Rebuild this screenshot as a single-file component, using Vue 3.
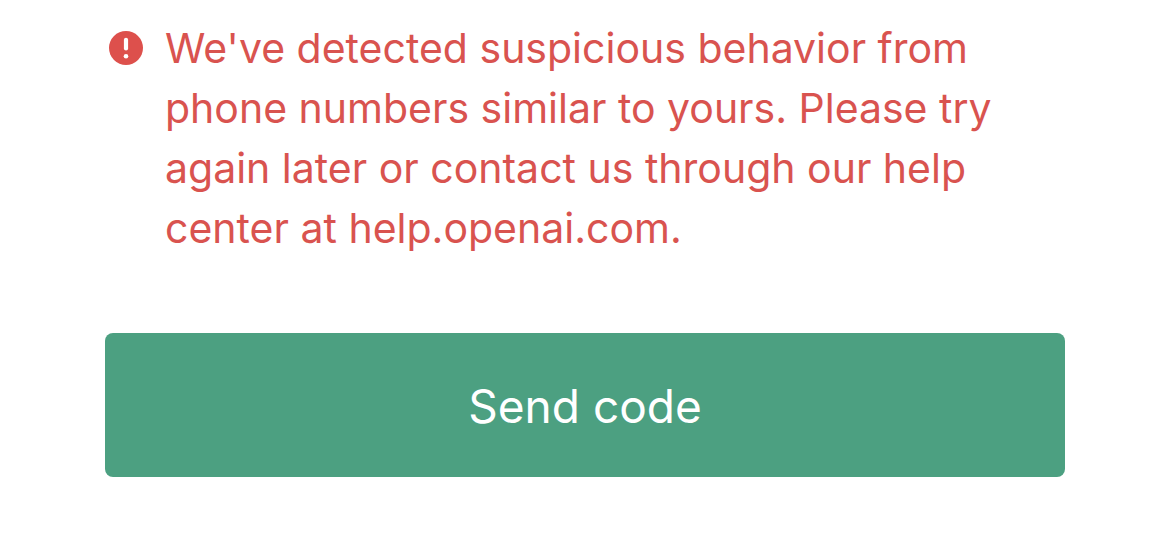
<script setup>
const message =
  "We've detected suspicious behavior from phone numbers similar to yours. Please try again later or contact us through our help center at help.openai.com."
</script>

<template>
  <main class="page">
    <div class="alert" role="alert">
      <svg class="icon" viewBox="0 0 34 34" aria-hidden="true">
        <circle cx="17" cy="17" r="17" fill="#dd504c" />
        <path d="M17 8.8v8.6" stroke="#fff" stroke-width="4.2" stroke-linecap="round" />
        <circle cx="17" cy="25.2" r="2.3" fill="#fff" />
      </svg>
      <p class="message">{{ message }}</p>
    </div>
    <button class="send" type="button">Send code</button>
  </main>
</template>

<style>
body {
  margin: 0;
  background: #fff;
}
</style>

<style scoped>
.page {
  box-sizing: border-box;
  padding: 18px 105px 59px;
  font-family: Inter, "Liberation Sans", sans-serif;
}
.alert {
  display: flex;
  align-items: flex-start;
  gap: 22px;
  padding-left: 4px;
}
.icon {
  flex: none;
  width: 34px;
  height: 34px;
  margin-top: 13px;
}
.message {
  margin: 0;
  color: #d9534f;
  font-size: 41px;
  line-height: 60px;
}
.send {
  display: block;
  width: 100%;
  margin-top: 75px;
  padding: 43px 24px 41px;
  border: 0;
  border-radius: 8px;
  background: #4ca081;
  color: #fff;
  font-family: inherit;
  font-size: 46px;
  line-height: 60px;
}
</style>
